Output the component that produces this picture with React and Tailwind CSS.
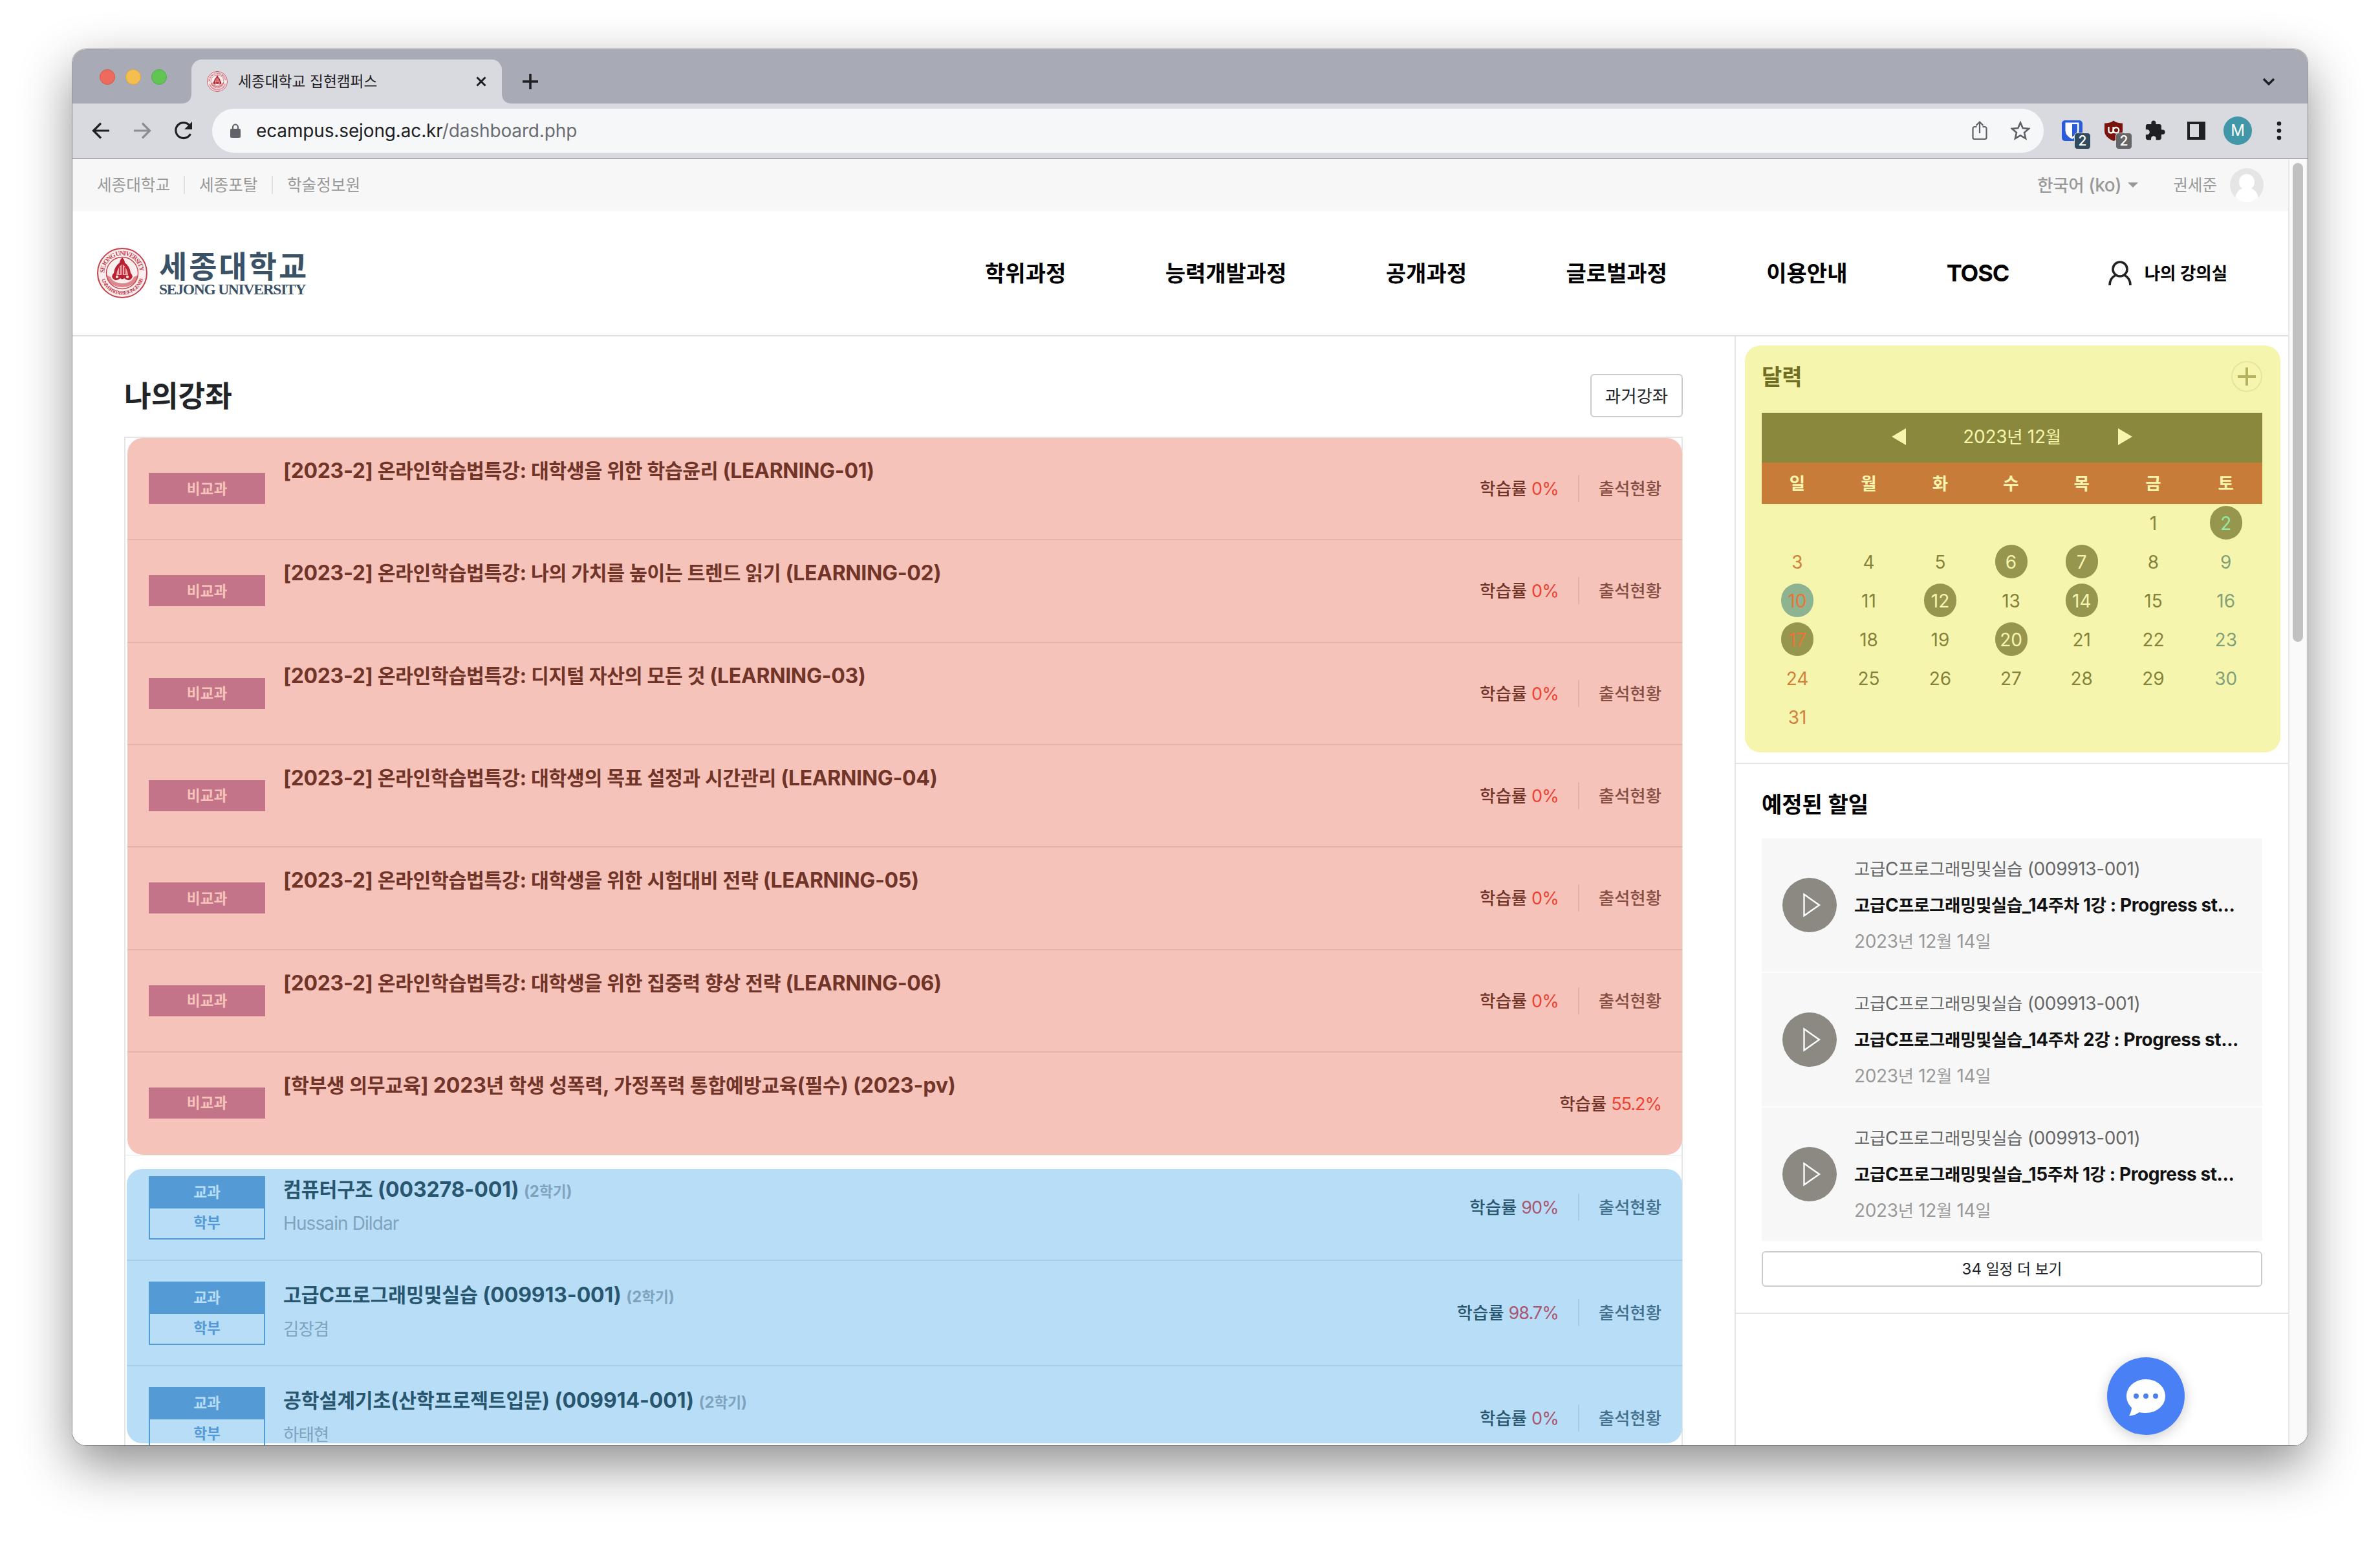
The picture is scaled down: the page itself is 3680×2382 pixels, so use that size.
import React from "react";

/* Hangul is set slightly smaller than the Latin glyphs beside it. */
function T({ children }) {
  const parts = String(children).split(/([\u3131-\uD7A3]+)/);
  return parts.map((p, i) =>
    i % 2 ? (
      <span key={i} className="text-[0.945em] leading-[0]">{p}</span>
    ) : (
      <React.Fragment key={i}>{p}</React.Fragment>
    )
  );
}

function Emblem({ className }) {
  return (
    <svg viewBox="0 0 78 78" className={className}>
      <defs>
        <path id="ring" d="M39 39 m-27.5 0 a27.5 27.5 0 1 1 55 0" />
        <path id="ringLow" d="M39 39 m-33.5 0 a33.5 33.5 0 0 0 67 0" />
      </defs>
      <circle cx="39" cy="39" r="38" fill="#fbeeee" stroke="#c4424e" strokeWidth="2" />
      <circle cx="39" cy="39" r="24.5" fill="none" stroke="#c4424e" strokeWidth="1.4" />
      <text fontFamily="Liberation Serif" fontWeight="bold" fontSize="10" fill="#c4424e">
        <textPath href="#ring" textLength="84">SEJONG UNIVERSITY</textPath>
      </text>
      <text fontFamily="Liberation Serif" fontWeight="bold" fontSize="8" fill="#c4424e">
        <textPath href="#ringLow" startOffset="10" textLength="86">UNIVERSITAS SEJONGENSIS</textPath>
      </text>
      <path d="M14 42 q4 18 25 19 q21 -1 25 -19 l-7 3 q-3 9 -18 10 q-15 -1 -18 -10z" fill="#c4424e" opacity=".6" />
      <path d="M39 15 q-4 4 -4 8 q-8 6 -9 16 q-5 5 -1 9 q5 5 11 -1 q3 3 6 0 q6 6 11 1 q4 -4 -1 -9 q-1 -10 -9 -16 q0 -4 -4 -8z" fill="#b92130" />
      <path d="M39 25 q-8 6 -9 17 h18 q-1 -11 -9 -17z" fill="#e9a9ae" />
      <path d="M39 16 v32M35 30v11M43 30v11" stroke="#b92130" strokeWidth="1.6" />
      <circle cx="31" cy="45" r="2.2" fill="#f6dcdd" />
      <circle cx="47" cy="45" r="2.2" fill="#f6dcdd" />
    </svg>
  );
}

function TabStrip() {
  return (
    <div className="flex h-[84px] items-end bg-[#a8aab6] pl-[42px]">
      <div className="mb-[29px] flex gap-4">
        <span className="size-6 rounded-full border border-[#d9574b] bg-[#ec6a5e]" />
        <span className="size-6 rounded-full border border-[#dca53f] bg-[#f4bf4f]" />
        <span className="size-6 rounded-full border border-[#51ad43] bg-[#61c554]" />
      </div>
      <svg className="ml-[22px] h-4 w-4" viewBox="0 0 16 16"><path d="M16 0v16H0Q16 16 16 0z" fill="#d9dae0" /></svg>
      <div className="flex h-[68px] w-[480px] items-center rounded-t-[16px] bg-[#d9dae0] pr-[24px] pl-6">
        <Emblem className="size-8" />
        <span className="ml-4 flex-1 text-[24px] whitespace-nowrap text-[#1f2024]"><T>세종대학교 집현캠퍼스</T></span>
        <svg className="size-4" viewBox="0 0 16 16"><path d="M1.500 1.500l13 13M14.500 1.500l-13 13" stroke="#1f2024" strokeWidth="3" /></svg>
      </div>
      <svg className="h-4 w-4" viewBox="0 0 16 16"><path d="M0 0v16h16Q0 16 0 0z" fill="#d9dae0" /></svg>
      <svg className="mb-[22px] ml-4 size-6" viewBox="0 0 24 24"><path d="M12 0v24M0 12h24" stroke="#1f2024" strokeWidth="3.600" /></svg>
      <svg className="mr-[50px] mb-[28px] ml-auto h-3 w-5" viewBox="0 0 20 12"><path d="M2 2l8 8 8-8" fill="none" stroke="#1f2024" strokeWidth="3.400" /></svg>
    </div>
  );
}

function Toolbar() {
  return (
    <div className="flex h-[86px] items-center border-b-2 border-[#adaeb3] bg-[#d9dae0] pl-[30px]">
      <svg className="h-[26px] w-7" viewBox="0 0 28 26"><path d="M27 13H3M14 1.500L2.500 13 14 24.500" fill="none" stroke="#1f2024" strokeWidth="3.200" /></svg>
      <svg className="ml-9 h-[26px] w-7" viewBox="0 0 28 26"><path d="M1 13h24M14 1.500L25.500 13 14 24.500" fill="none" stroke="#8c8d92" strokeWidth="3.200" /></svg>
      <svg className="ml-9 size-7" viewBox="0 0 28 28"><path d="M24.500 19A12 12 0 1 1 23 5.800" fill="none" stroke="#1f2024" strokeWidth="3.200" /><path d="M27 0v12H15z" fill="#1f2024" /></svg>
      <div className="ml-[30px] flex h-[68px] w-[2832px] items-center rounded-full bg-[#f6f7f9] pr-[21px] pl-7">
        <svg className="h-[22px] w-4" viewBox="0 0 16 22"><rect y="8" width="16" height="14" rx="2" fill="#5f6268" /><path d="M4 9V5.500a4 4 0 0 1 8 0V9" fill="none" stroke="#5f6268" strokeWidth="2.200" /></svg>
        <span className="ml-6 flex-1 text-[28px] tracking-[-0.14px] text-[#1f2024]">ecampus.sejong.ac.kr<span className="text-[#6a6c72]">/dashboard.php</span></span>
        <svg className="h-[30px] w-6" viewBox="0 0 24 30"><path d="M7.500 9H4a2.500 2.500 0 0 0-2.500 2.500v14A2.500 2.500 0 0 0 4 28h16a2.500 2.500 0 0 0 2.500-2.500v-14A2.500 2.500 0 0 0 20 9h-3.500M12 19V2M6.500 7L12 1.500 17.500 7" fill="none" stroke="#5f6268" strokeWidth="2.200" /></svg>
        <svg className="ml-9 size-[30px]" viewBox="0 0 30 30"><path d="M15 2.500l3.700 8.600 9.300.8-7 6.100 2.100 9.100-8.100-4.800-8.100 4.800L9 18l-7-6.100 9.300-.8z" fill="none" stroke="#5f6268" strokeWidth="2.600" /></svg>
      </div>
      <div className="relative ml-7 size-8">
        <svg className="size-8" viewBox="0 0 32 32"><rect width="32" height="32" rx="5" fill="#2c5bd8" /><path d="M5.500 3.500h21V16q0 7.500-10.500 13Q5.500 23.500 5.500 16z" fill="#fff" /><path d="M16 6h8v10q0 5.500-8 9.500z" fill="#2c5bd8" /></svg>
        <span className="absolute top-[19px] left-[19px] flex h-[26px] w-[26px] items-center justify-center rounded-[5px] border border-[#d9dae0] bg-[#304b5d] text-[21px] font-medium text-white">2</span>
      </div>
      <div className="relative ml-8 size-8">
        <svg className="size-8" viewBox="0 0 32 32"><path d="M16 .5q5 4 14 4V17q0 9-14 15Q2 26 2 17V4.500q9 0 14-4z" fill="#7a130c" /><path d="M8.500 10v6q0 3.500 3.500 3.500t3.500-3.500v-6M15.500 16v4" fill="none" stroke="#fff" strokeWidth="2.300" /><circle cx="20" cy="15.200" r="4.200" fill="none" stroke="#fff" strokeWidth="2.300" /></svg>
        <span className="absolute top-[19px] left-[19px] flex h-[26px] w-[26px] items-center justify-center rounded-[5px] border border-[#d9dae0] bg-[#666] text-[21px] font-medium text-white">2</span>
      </div>
      <svg className="ml-[31px] size-[34px]" viewBox="0 0 24 24"><path d="M20.500 11H19V7c0-1.100-.9-2-2-2h-4V3.500a2.500 2.500 0 0 0-5 0V5H4c-1.100 0-1.990.9-1.990 2v3.800H3.500c1.490 0 2.700 1.210 2.700 2.700s-1.210 2.700-2.700 2.700H2V20c0 1.100.9 2 2 2h3.800v-1.500c0-1.490 1.210-2.700 2.700-2.700s2.700 1.210 2.700 2.700V22H17c1.100 0 2-.9 2-2v-4h1.500a2.500 2.500 0 0 0 0-5z" fill="#1f2024" /></svg>
      <svg className="ml-[33px] size-7" viewBox="0 0 28 28"><path fillRule="evenodd" d="M0 0h28v28H0zM4 4v20h14V4z" fill="#1f2024" /></svg>
      <span className="ml-7 flex size-11 items-center justify-center rounded-full bg-[#4196a7] text-[24px] text-white">M</span>
      <svg className="ml-[38px] h-8 w-2" viewBox="0 0 8 32"><circle cx="4" cy="5" r="3.300" fill="#1f2024" /><circle cx="4" cy="16" r="3.300" fill="#1f2024" /><circle cx="4" cy="27" r="3.300" fill="#1f2024" /></svg>
    </div>
  );
}

function TopBar() {
  return (
    <div className="flex h-[80px] items-center bg-[#f7f7f7] pr-[38px] pb-px pl-[38px] text-[26px] whitespace-nowrap text-[#999]">
      <span className="w-[134px]"><T>세종대학교</T></span>
      <span className="mr-[22px] h-7 w-0.5 bg-[#e0e0e0]" />
      <span className="w-[112px]"><T>세종포탈</T></span>
      <span className="mr-[22px] h-7 w-0.5 bg-[#e0e0e0]" />
      <span><T>학술정보원</T></span>
      <span className="ml-auto text-[28px] font-medium tracking-[-0.4px]"><T>한국어 (ko)</T></span>
      <svg className="ml-2.5 h-2 w-4" viewBox="0 0 16 8"><path d="M0 0h16L8 8z" fill="#999" /></svg>
      <span className="ml-[54px]"><T>권세준</T></span>
      <svg className="ml-5 size-[52px]" viewBox="0 0 52 52"><circle cx="26" cy="26" r="26" fill="#e5e5e5" /><path d="M26 9c-7 0-12 5.500-12 12.500 0 5 2.500 8 5 10-6 2-10 7-10.500 14a26 26 0 0 0 35 0c-.5-7-4.500-12-10.500-14 2.500-2 5-5 5-10C38 14.500 33 9 26 9z" fill="#fff" /></svg>
    </div>
  );
}

const NAV = ["학위과정", "능력개발과정", "공개과정", "글로벌과정", "이용안내", "TOSC"];

function Header() {
  return (
    <div className="flex h-[194px] items-center border-b-2 border-[#ddd] pr-[94px] pl-[38px]">
      <Emblem className="size-[78px]" />
      <div className="ml-[18px] flex w-[230px] flex-col text-[#3b5166]">
        <span className="text-[47px] leading-[50px] font-bold tracking-[3px] whitespace-nowrap">세종대학교</span>
        <span className="font-['Liberation_Serif'] text-[23.5px] leading-[20px] font-bold tracking-[-1.25px] whitespace-nowrap">SEJONG UNIVERSITY</span>
      </div>
      <div className="ml-auto flex items-center gap-[153.4px] text-[36px] font-bold whitespace-nowrap text-black">
        {NAV.map((n) => <span key={n} className={n === "TOSC" ? "tracking-[-1.1px]" : ""}><T>{n}</T></span>)}
        <span className="flex items-center">
          <svg className="h-[38px] w-[36px]" viewBox="0 0 36 38"><circle cx="18" cy="13" r="11" fill="none" stroke="#222" strokeWidth="3.600" /><path d="M2 38c0-8 4-13 9-15.500M34 38c0-8-4-13-9-15.500" fill="none" stroke="#222" strokeWidth="3.600" /></svg>
          <span className="ml-[20px] text-[28px]"><T>나의 강의실</T></span>
        </span>
      </div>
    </div>
  );
}

const RED = [
  ["[2023-2] 온라인학습법특강: 대학생을 위한 학습윤리 (LEARNING-01)", "0%", true],
  ["[2023-2] 온라인학습법특강: 나의 가치를 높이는 트렌드 읽기 (LEARNING-02)", "0%", true],
  ["[2023-2] 온라인학습법특강: 디지털 자산의 모든 것 (LEARNING-03)", "0%", true],
  ["[2023-2] 온라인학습법특강: 대학생의 목표 설정과 시간관리 (LEARNING-04)", "0%", true],
  ["[2023-2] 온라인학습법특강: 대학생을 위한 시험대비 전략 (LEARNING-05)", "0%", true],
  ["[2023-2] 온라인학습법특강: 대학생을 위한 집중력 향상 전략 (LEARNING-06)", "0%", true],
  ["[학부생 의무교육] 2023년 학생 성폭력, 가정폭력 통합예방교육(필수) (2023-pv)", "55.2%", false],
];

const BLUE = [
  ["컴퓨터구조 (003278-001)", "Hussain Dildar", "90%"],
  ["고급C프로그래밍및실습 (009913-001)", "김장겸", "98.7%"],
  ["공학설계기초(산학프로젝트입문) (009914-001)", "하태현", "0%"],
];

function RedRow({ row, last }) {
  return (
    <div className={"flex h-[158.33px] items-start pr-8 pl-[33px] " + (last ? "tracking-[-0.2px]" : "border-b-2 border-[#e8b2a9] tracking-[-0.34px]")}>
      <span className="mt-[54px] flex h-12 w-[180px] items-center justify-center bg-[#c37488] pt-px text-[24px] font-bold tracking-normal text-[#f6c3ba]"><T>비교과</T></span>
      <span className="mt-[31px] ml-[28px] flex-1 text-[32px] leading-[40px] font-bold whitespace-nowrap text-[#713428]"><T>{row[0]}</T></span>
      <div className="flex items-center self-center text-[28px] font-medium tracking-normal whitespace-nowrap text-[#713428]">
        <span><T>학습률</T><span className="ml-[7px] text-[27px] font-normal tracking-[-1px] text-[#ea4433]">{row[1]}</span></span>
        {row[2] && <span className="ml-[30px] flex h-[42px] items-center border-l-2 border-[#e8b2a9] pl-[30px] text-[#874f43]"><T>출석현황</T></span>}
      </div>
    </div>
  );
}

function BlueRow({ row }) {
  return (
    <div className="flex h-[163px] shrink-0 items-start border-b-2 border-[#a7cde8] pr-8 pl-[34px]">
      <div className="mt-8 w-[180px] border-2 border-[#549bd5] text-center text-[24px] font-bold">
        <div className="h-12 bg-[#549bd5] leading-[46px] text-[#b8ddf7]"><T>교과</T></div>
        <div className="h-[46px] leading-[43px] text-[#549bd5]"><T>학부</T></div>
      </div>
      <div className="mt-[31px] ml-[28px] flex flex-1 flex-col whitespace-nowrap">
        <span className="text-[32px] leading-[44px] font-bold tracking-[-0.1px] text-[#28566f]"><T>{row[0]}</T> <span className="text-[24px] font-bold text-[#7fa3bd]"><T>(2학기)</T></span></span>
        <span className="mt-[7px] text-[28px] leading-[40px] tracking-[-0.9px] text-[#7fa3bd]"><T>{row[1]}</T></span>
      </div>
      <div className="flex items-center self-center pb-px text-[28px] font-medium whitespace-nowrap text-[#28566f]">
        <span><T>학습률</T><span className="ml-[7px] text-[27px] font-normal tracking-[-1px] text-[#a9566f]">{row[2]}</span></span>
        <span className="ml-[30px] flex h-[42px] items-center border-l-2 border-[#a7cde8] pl-[30px] text-[#43708c]"><T>출석현황</T></span>
      </div>
    </div>
  );
}

function Main() {
  return (
    <div className="flex w-[2570px] shrink-0 flex-col pt-[58px] pr-20 pl-20">
      <div className="flex h-[67px] items-center justify-between">
        <h1 className="text-[48px] font-bold text-[#212529]"><T>나의강좌</T></h1>
        <button className="flex h-[67px] w-[143px] items-center justify-center rounded-[6px] border-2 border-[#ccc] text-[28px] text-[#212529]"><T>과거강좌</T></button>
      </div>
      <div className="mt-[30px] flex h-[1600px] shrink-0 flex-col border-2 border-[#e5e5e5]">
        <div className="border-b border-[#e5e5e5]">
          <div className="-mr-px ml-[3px] flex flex-col rounded-[24px] bg-[#f6c3ba]">
            {RED.map((r, i) => <RedRow key={r[0]} row={r} last={i === 6} />)}
          </div>
        </div>
        <div className="mt-[21px] -mr-px ml-[2px] flex h-[424px] flex-col rounded-[24px] bg-[#b8ddf7]">
          <div className="-mt-[21px] flex flex-col">
            {BLUE.map((r) => <BlueRow key={r[0]} row={r} />)}
          </div>
        </div>
      </div>
    </div>
  );
}

const DAYS = ["일", "월", "화", "수", "목", "금", "토"];
const EVENTS = [2, 6, 7, 12, 14, 17, 20];

function Day({ d, i }) {
  const event = EVENTS.includes(d);
  const today = d === 10;
  let color = "text-[#85833b]";
  if (i === 0) color = event || today ? "text-[#e87535]" : "text-[#d0813c]";
  else if (i === 6) color = event ? "text-[#94eaa5]" : "text-[#84a077]";
  else if (event) color = "text-[#f6f5ae]";
  const bg = event ? " bg-[#96964f]" : today ? " bg-[#8db391]" : "";
  return (
    <div className="flex h-[60px] items-center justify-center pb-0.5">
      <span className={"flex h-[52px] w-[50px] items-center justify-center rounded-full pt-px " + color + bg}>{d > 0 && d < 32 ? d : ""}</span>
    </div>
  );
}

function Calendar() {
  const cells = Array.from({ length: 42 }, (_, k) => k - 4);
  return (
    <div className="h-[661px] border-b-2 border-[#e5e5e5] pt-[14px] pl-[14px]">
      <div className="flex h-[629px] w-[828px] flex-col rounded-[24px] bg-[#f6f5ae] pt-6 pr-[28px] pl-[26px]">
        <div className="flex h-12 items-center justify-between">
          <h2 className="text-[36px] font-bold text-[#6f6e22]"><T>달력</T></h2>
          <svg className="size-12" viewBox="0 0 48 48"><circle cx="24" cy="24" r="23" fill="none" stroke="#e6e59d" strokeWidth="2" /><path d="M24 10v28M10 24h28" stroke="#b5b35f" strokeWidth="4" /></svg>
        </div>
        <div className="mt-8 flex h-[77px] items-center justify-center bg-[#89883c] pb-[3px] text-[28px] tracking-[-0.3px] text-[#f6f5ae]">
          <svg className="h-[26px] w-[22px]" viewBox="0 0 22 26"><path d="M22 0v26L0 13z" fill="#f6f5ae" /></svg>
          <span className="w-[328px] text-center"><T>2023년 12월</T></span>
          <svg className="h-[26px] w-[22px]" viewBox="0 0 22 26"><path d="M0 0v26l22-13z" fill="#f6f5ae" /></svg>
        </div>
        <div className="grid h-16 grid-cols-[110px_111px_110px_109px_109.5px_112px_112.5px] items-center bg-[#c77c3a] text-center text-[28px] font-bold text-[#f6f5ae]">
          {DAYS.map((d) => <span key={d}><T>{d}</T></span>)}
        </div>
        <div className="grid grid-cols-[110px_111px_110px_109px_109.5px_112px_112.5px] text-[28px]">
          {cells.map((d, k) => <Day key={k} d={d} i={k % 7} />)}
        </div>
      </div>
    </div>
  );
}

const TODOS = ["14주차 1강", "14주차 2강", "15주차 1강"];

function Todos() {
  return (
    <div className="flex flex-col border-b-2 border-[#e5e5e5] pt-10 pr-10 pb-10 pl-10">
      <h2 className="text-[36px] leading-[44px] font-bold text-black"><T>예정된 할일</T></h2>
      <div className="mt-[31px] flex flex-col gap-0.5">
        {TODOS.map((t) => (
          <div key={t} className="flex h-[206px] items-center bg-[#f7f7f7] pl-8">
            <svg className="size-[84px]" viewBox="0 0 84 84"><circle cx="42" cy="42" r="42" fill="#8c8882" /><path d="M33.500 25.500v33L57 42z" fill="none" stroke="#fff" strokeWidth="2.400" /></svg>
            <div className="ml-[27px] flex flex-col text-[28px] leading-[56px] whitespace-nowrap">
              <span className="tracking-[-0.34px] text-[#666]"><T>고급C프로그래밍및실습 (009913-001)</T></span>
              <span className="font-bold tracking-[-0.4px] text-[#111]"><T>{"고급C프로그래밍및실습_" + t + " : Progress st..."}</T></span>
              <span className="tracking-[-0.36px] text-[#999]"><T>2023년 12월 14일</T></span>
            </div>
          </div>
        ))}
      </div>
      <button className="mt-4 flex h-[55px] items-center justify-center rounded-[6px] border-2 border-[#ccc] text-[24px] text-[#212529]"><span><T>34 일정 더 보기</T></span></button>
    </div>
  );
}

export default function App() {
  return (
    <div className="h-[2382px] w-[3680px] overflow-hidden bg-white px-[112px] pt-[76px] font-['Inter','Noto_Sans_CJK_KR',sans-serif]">
      <div className="h-[2158px] w-[3456px] rounded-[21px] shadow-[0_30px_80px_rgba(0,0,0,0.45),0_0_0_1px_rgba(0,0,0,0.3)]">
        <div className="flex h-full flex-col overflow-hidden rounded-[21px] bg-white">
          <TabStrip />
          <Toolbar />
          <div className="flex h-[1988px]">
            <div className="relative h-full w-[3428px] overflow-hidden border-r-2 border-[#e8e8e8]">
              <TopBar />
              <Header />
              <div className="flex h-[1714px]">
                <Main />
                <div className="w-[856px] border-l-2 border-[#e5e5e5]">
                  <Calendar />
                  <Todos />
                </div>
              </div>
              <button className="absolute right-[160px] bottom-4 size-[120px] rounded-full bg-[#4a80f5] shadow-[0_4px_20px_rgba(0,0,0,0.2)]">
                <svg className="size-[120px]" viewBox="0 0 120 120"><path d="M60 34c-17 0-30 11.500-30 26 0 7 3 13 8 18 0 4-1.500 8-4 12.500 6-.5 11-2 16-5.500 3 .8 6.500 1 10 1 17 0 30-11.500 30-26S77 34 60 34z" fill="#fff" /><circle cx="45" cy="60" r="4" fill="#4a80f5" /><circle cx="60" cy="60" r="4" fill="#4a80f5" /><circle cx="75" cy="60" r="4" fill="#4a80f5" /></svg>
              </button>
            </div>
            <div className="flex w-7 justify-center border-r-2 border-[#eee] bg-[#fafafa] pt-1.5">
              <div className="h-[740px] w-4 rounded-full bg-[#c1c1c1]" />
            </div>
          </div>
        </div>
      </div>
    </div>
  );
}
